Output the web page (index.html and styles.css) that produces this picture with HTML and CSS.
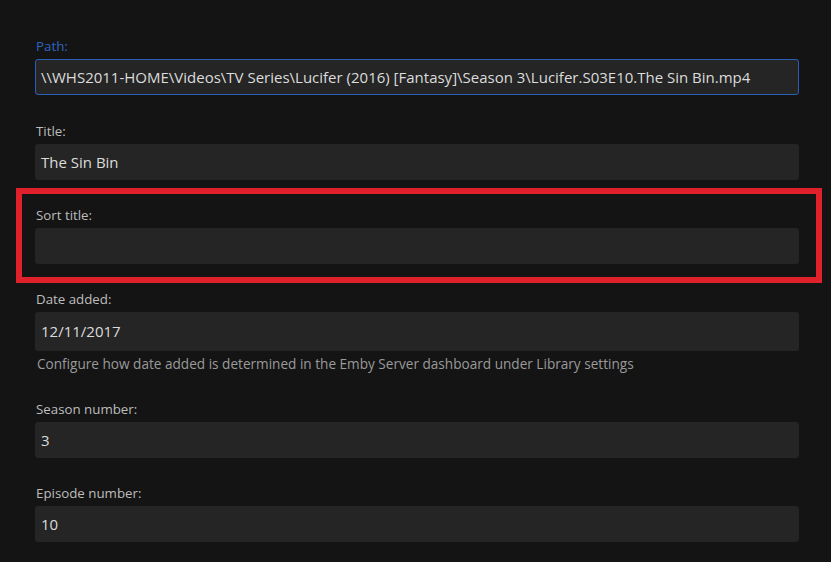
FILE: index.html
```html
<!DOCTYPE html>
<html>
<head>
<meta charset="utf-8">
<link rel="stylesheet" href="styles.css">
</head>
<body>
<form class="form">
  <div class="field field-path">
    <label class="label label-focus">Path:</label>
    <div class="input input-focus">\\WHS2011-HOME\Videos\TV Series\Lucifer (2016) [Fantasy]\Season 3\Lucifer.S03E10.The Sin Bin.mp4</div>
  </div>
  <div class="field">
    <label class="label">Title:</label>
    <div class="input">The Sin Bin</div>
  </div>
  <div class="highlight">
    <div class="field field-inner">
      <label class="label">Sort title:</label>
      <div class="input"></div>
    </div>
  </div>
  <div class="field">
    <label class="label">Date added:</label>
    <div class="input input-date">12/11/2017</div>
    <div class="help">Configure how date added is determined in the Emby Server dashboard under Library settings</div>
  </div>
  <div class="field">
    <label class="label">Season number:</label>
    <div class="input">3</div>
  </div>
  <div class="field">
    <label class="label">Episode number:</label>
    <div class="input">10</div>
  </div>
</form>
</body>
</html>
```
FILE: styles.css
```css
html, body {
  margin: 0;
  padding: 0;
  background: #141414;
  height: 100%;
  overflow: hidden;
}
body {
  font-family: "Open Sans", "Noto Sans", sans-serif;
}
.form {
  display: flex;
  flex-direction: column;
  padding: 36px 32px 0 35px;
}
.field {
  display: flex;
  flex-direction: column;
  margin-bottom: 25px;
}
.field-path {
  margin-bottom: 26px;
}
.label {
  font-size: 13.3px;
  line-height: 20px;
  height: 20px;
  margin-bottom: 3px;
  color: #bdbdbd;
  padding-left: 1px;
}
.label-focus {
  color: #2f65c0;
}
.input {
  box-sizing: border-box;
  height: 36px;
  background: #252525;
  border-radius: 3px;
  color: #dcdcdc;
  font-size: 15px;
  line-height: 36px;
  padding: 0 6px;
  white-space: nowrap;
  overflow: hidden;
}
.input-focus {
  border: 1px solid #2a5fb8;
  line-height: 34px;
  padding: 0 5px;
}
.input-date {
  height: 39px;
  line-height: 39px;
}
.help {
  font-size: 13.6px;
  line-height: 20px;
  margin-top: 3px;
  color: #9a9a9a;
  padding-left: 2px;
}
.highlight {
  margin: -17px -23px 6px -19px;
  border: 6px solid #e0202a;
  padding: 11px 17px 13px 13px;
}
.field-inner {
  margin-bottom: 0;
}
```
